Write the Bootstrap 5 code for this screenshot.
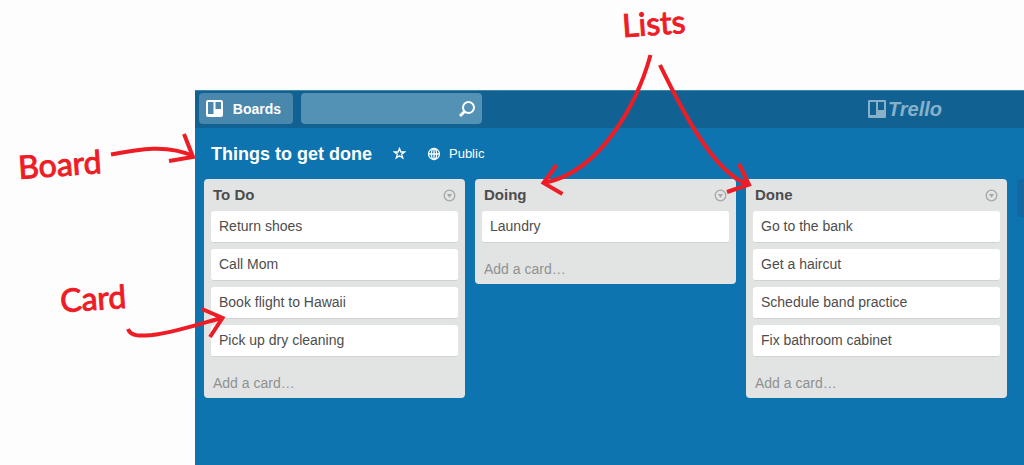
<!DOCTYPE html>
<html lang="en">
<head>
<meta charset="utf-8">
<meta name="viewport" content="width=device-width, initial-scale=1">
<title>Things to get done</title>
<link href="https://cdn.jsdelivr.net/npm/bootstrap@5.3.0/dist/css/bootstrap.min.css" rel="stylesheet">
<style>
body{background:#fdfdfd;font-family:"Liberation Sans",Arial,sans-serif;font-size:14px;line-height:20px;color:#4d4d4d}
.callouts{padding-left:622px;height:90px}
.side-notes{width:195px;padding-left:18px}
.note{color:#ee1c25;font-family:Lato,"Liberation Sans",sans-serif;font-size:32px;line-height:46px;rotate:-4deg;-webkit-text-stroke:1px #ee1c25}
.note-board{margin-top:51px}
.note-card{margin:88px 0 0 42px}
.board{background:#0e74b0;min-width:0}
.topbar{background:#116293;height:38px;padding:0 82px 2px 4px;border-top:1px solid #3f86ad}
.boards-btn{background:#4a87ad;color:#fff;border:0;border-radius:4px;height:31px;width:94px;padding:0 7px;font-weight:700;font-size:14px;line-height:20px}
.boards-btn:hover{background:#5b96ba;color:#fff}
.search{background:#5391b5;border-radius:4px;height:31px;width:181px;padding-right:6px}
.search input{background:transparent;border:0;min-width:0;color:#fff;outline:0}
.brand{color:#88b1c9;font-size:20px;line-height:30px;font-weight:700;font-style:italic;text-decoration:none;gap:2px}
.titlebar{height:51px;padding-left:16px;color:#fff}
.titlebar h1{font-size:18px;line-height:24px;font-weight:700}
.star-btn{margin-left:21px;color:#fff}
.visibility{margin-left:21px;font-size:13px;gap:8px;color:#fff}
.lists{gap:10px;padding-left:9px}
.tlist{width:261px;background:#e2e4e4;border-radius:4px;padding:0 7px}
.tlist header{height:32px;padding:0 2px}
.tlist h2{font-size:15px;line-height:20px;font-weight:700}
.cards{gap:6px}
.task{background:#fff;border-radius:3px;height:32px;padding:5px 8px;border-bottom:1px solid #d0d2d2}
.add{color:#8f9191;text-decoration:none;padding:16px 2px 5px}
.new-list{width:261px;height:38px;background:#1567a0;border-radius:4px}
.arrows{top:0;left:0;pointer-events:none}
</style>
</head>
<body class="min-vh-100 d-flex flex-column position-relative overflow-hidden">
<div class="callouts d-flex align-items-start"><div class="note">Lists</div></div>
<div class="d-flex flex-fill">
  <aside class="side-notes flex-shrink-0 d-flex flex-column align-items-start">
    <div class="note note-board">Board</div>
    <div class="note note-card">Card</div>
  </aside>
  <main class="board flex-fill overflow-hidden">
    <nav class="topbar d-flex align-items-center gap-2">
      <button type="button" class="boards-btn btn d-flex align-items-center justify-content-between flex-shrink-0 pe-2">
        <svg width="17" height="17" viewBox="0 0 17 17" aria-hidden="true"><path fill="#fff" fill-rule="evenodd" d="M2 0h13a2 2 0 0 1 2 2v13a2 2 0 0 1-2 2H2a2 2 0 0 1-2-2V2a2 2 0 0 1 2-2zM2 2v12h5.500V2zM9.500 2v7H15V2z"/></svg>
        <span class="pe-1">Boards</span>
      </button>
      <div class="search d-flex align-items-center flex-shrink-0">
        <input type="text" class="flex-fill" aria-label="Search">
        <svg class="flex-shrink-0" width="18" height="18" viewBox="0 0 18 18" fill="none" stroke="#fff" aria-hidden="true"><circle cx="10.500" cy="7.500" r="5.500" stroke-width="2"/><path d="M6.500 11.500L2 16" stroke-width="3"/></svg>
      </div>
      <a href="#" class="brand d-flex align-items-center ms-auto">
        <svg width="18" height="18" viewBox="0 0 18 18" aria-hidden="true"><path fill="#88b1c9" fill-rule="evenodd" d="M1 0h16a1 1 0 0 1 1 1v16a1 1 0 0 1-1 1H1a1 1 0 0 1-1-1V1a1 1 0 0 1 1-1zM2 2v13h6V2zM10 2v8h6V2z"/></svg>
        <span>Trello</span>
      </a>
    </nav>
    <div class="titlebar d-flex align-items-center">
      <h1 class="m-0">Things to get done</h1>
      <button type="button" class="star-btn btn p-0 border-0 d-flex" aria-label="Star board">
        <svg width="13" height="13" viewBox="0 0 13 13" fill="none" stroke="#fff" stroke-width="1.300"><path d="M6.500 1.500L7.900 5h3.600L8.600 7.300l1.100 3.700-3.200-2.200L3.300 11l1.100-3.700L1.500 5h3.600z"/></svg>
      </button>
      <button type="button" class="visibility btn p-0 border-0 d-flex align-items-center">
        <svg width="14" height="14" viewBox="0 0 14 14" fill="none" stroke="#fff" stroke-width="1.300" aria-hidden="true"><circle cx="7" cy="7" r="5.500"/><ellipse cx="7" cy="7" rx="2.600" ry="5.500"/><path d="M7 1.500v11M1.500 7h11"/></svg>
        <span>Public</span>
      </button>
    </div>
    <div class="lists d-flex align-items-start">
      <section class="tlist flex-shrink-0 d-flex flex-column">
        <header class="d-flex align-items-center justify-content-between"><h2 class="m-0">To Do</h2>
          <button type="button" class="btn p-0 border-0 d-flex" aria-label="List menu"><svg width="13" height="13" viewBox="0 0 13 13"><circle cx="6.500" cy="6.500" r="5.300" fill="none" stroke="#a6a8a8" stroke-width="1.300"/><path d="M4 5h5L6.500 8.800z" fill="#a6a8a8"/></svg></button></header>
        <div class="cards d-flex flex-column">
          <div class="task">Return shoes</div>
          <div class="task">Call Mom</div>
          <div class="task">Book flight to Hawaii</div>
          <div class="task">Pick up dry cleaning</div>
        </div>
        <a href="#" class="add">Add a card…</a>
      </section>
      <section class="tlist flex-shrink-0 d-flex flex-column">
        <header class="d-flex align-items-center justify-content-between"><h2 class="m-0">Doing</h2>
          <button type="button" class="btn p-0 border-0 d-flex" aria-label="List menu"><svg width="13" height="13" viewBox="0 0 13 13"><circle cx="6.500" cy="6.500" r="5.300" fill="none" stroke="#a6a8a8" stroke-width="1.300"/><path d="M4 5h5L6.500 8.800z" fill="#a6a8a8"/></svg></button></header>
        <div class="cards d-flex flex-column">
          <div class="task">Laundry</div>
        </div>
        <a href="#" class="add">Add a card…</a>
      </section>
      <section class="tlist flex-shrink-0 d-flex flex-column">
        <header class="d-flex align-items-center justify-content-between"><h2 class="m-0">Done</h2>
          <button type="button" class="btn p-0 border-0 d-flex" aria-label="List menu"><svg width="13" height="13" viewBox="0 0 13 13"><circle cx="6.500" cy="6.500" r="5.300" fill="none" stroke="#a6a8a8" stroke-width="1.300"/><path d="M4 5h5L6.500 8.800z" fill="#a6a8a8"/></svg></button></header>
        <div class="cards d-flex flex-column">
          <div class="task">Go to the bank</div>
          <div class="task">Get a haircut</div>
          <div class="task">Schedule band practice</div>
          <div class="task">Fix bathroom cabinet</div>
        </div>
        <a href="#" class="add">Add a card…</a>
      </section>
      <div class="new-list flex-shrink-0"></div>
    </div>
  </main>
</div>
<!-- Hand-drawn arrows from each note to its part of the board -->
<svg class="arrows position-absolute" width="760" height="345" viewBox="0 0 760 345" fill="none" stroke="#ee1c25" stroke-width="4" aria-hidden="true">
  <path d="M111 154.500C139 149 168 144 193 156M184 134l9 23-24 4"/>
  <path d="M128 329C131 337 142 336 152 335 176 332 198 324 222 318M202 309l20.500 9L210 337"/>
  <path d="M650.500 55C639 97 604 171 544 183M556.500 165L543.500 183l19 11"/>
  <path d="M660 65C678 102 713 174 748 184M739 164l10 20.500-22 7.500"/>
</svg>
<script src="https://cdn.jsdelivr.net/npm/bootstrap@5.3.0/dist/js/bootstrap.bundle.min.js"></script>
</body>
</html>
